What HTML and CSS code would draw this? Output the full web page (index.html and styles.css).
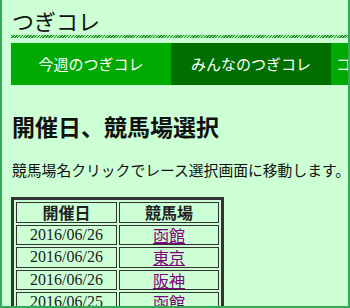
FILE: index.html
```html
<!DOCTYPE html>
<html lang="ja">
<head>
<meta charset="utf-8">
<title>つぎコレ</title>
<link rel="stylesheet" href="styles.css">
</head>
<body>
<div class="page">
  <header class="site-header">
    <div class="site-title">つぎコレ</div>
    <div class="stripe"></div>
  </header>
  <nav class="nav">
    <a class="nav-item" href="#">今週のつぎコレ</a>
    <a class="nav-item current" href="#">みんなのつぎコレ</a>
    <a class="nav-item" href="#">コメント付きつぎコレ</a>
  </nav>
  <h1 class="heading">開催日、競馬場選択</h1>
  <p class="lead">競馬場名クリックでレース選択画面に移動します。</p>
  <table class="races">
    <thead>
      <tr><th class="col-date">開催日</th><th class="col-place">競馬場</th></tr>
    </thead>
    <tbody>
      <tr><td class="date">2016/06/26</td><td class="place"><a href="#">函館</a></td></tr>
      <tr><td class="date">2016/06/26</td><td class="place"><a href="#">東京</a></td></tr>
      <tr><td class="date">2016/06/26</td><td class="place"><a href="#">阪神</a></td></tr>
      <tr><td class="date">2016/06/25</td><td class="place"><a href="#">函館</a></td></tr>
      <tr><td class="date">2016/06/25</td><td class="place"><a href="#">東京</a></td></tr>
      <tr><td class="date">2016/06/25</td><td class="place"><a href="#">阪神</a></td></tr>
    </tbody>
  </table>
</div>
</body>
</html>
```

FILE: styles.css
```css
html, body {
  margin: 0;
  padding: 0;
}
body {
  background: #ccffd4;
  font-family: "Noto Sans CJK JP", "Noto Sans", sans-serif;
  color: #111;
}
.page {
  box-sizing: border-box;
  width: 350px;
  height: 308px;
  overflow: hidden;
  border: 2px solid #33aa55;
  border-top: none;
  padding: 0 0 0 9px;
  background: #ccffd4;
}
.site-header {
  padding-top: 6px;
}
.site-title {
  font-size: 22px;
  line-height: 28px;
  height: 28px;
  padding-left: 1px;
  color: #111;
}
.stripe {
  margin-top: 1px;
  height: 3px;
  background-color: #8fd89a;
  background-image: repeating-linear-gradient(135deg, #1c961c 0 1px, #a4e3ab 1px 2px);
}
.nav {
  display: flex;
  margin-top: 5px;
  height: 42px;
  overflow: hidden;
}
.nav-item {
  flex: 0 0 160px;
  text-align: center;
  line-height: 42px;
  font-size: 15px;
  color: #fff;
  text-decoration: none;
  background: #00aa00;
  white-space: nowrap;
}
.nav-item.current {
  background: #006f00;
}
.heading {
  margin: 26px 0 0 1px;
  font-size: 23px;
  line-height: 30px;
  font-weight: bold;
  color: #111;
}
.lead {
  margin: 19px 0 0 1px;
  font-size: 14.8px;
  line-height: 20px;
  white-space: nowrap;
}
.races {
  margin: 17px 0 0 0;
  border: 3px solid #333;
  border-spacing: 2px;
}
.races th, .races td {
  border: 1px solid #333;
  padding: 0;
  height: 18.5px;
  line-height: 18.5px;
  text-align: center;
  font-size: 16px;
  color: #222;
}
.races th {
  font-weight: bold;
}
.col-date {
  width: 99px;
}
.col-place {
  width: 98px;
}
.date {
  font-family: "Liberation Serif", "Times New Roman", serif;
}
.place a {
  color: #800080;
  text-decoration: underline;
}
```
